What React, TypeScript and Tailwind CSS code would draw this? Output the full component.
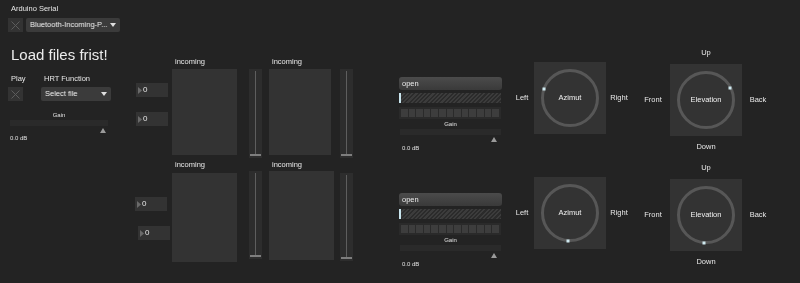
const XBox = () => (
  <div className="w-[15px] h-[14px] bg-[#333333] flex items-center justify-center">
    <svg width="9" height="9" viewBox="0 0 9 9">
      <path d="M0.5 0.5 L8.5 8.5 M8.5 0.5 L0.5 8.5" stroke="#5c5c5c" strokeWidth="1" />
    </svg>
  </div>
);

const Caret = () => (
  <svg width="6" height="4" viewBox="0 0 6 4">
    <polygon points="0,0 6,0 3,4" fill="#e0e0e0" />
  </svg>
);

const Dropdown = ({ label, w }: any) => (
  <div
    className={`h-[14px] ${w} rounded-[2px] bg-[#3b3b3b] flex items-center justify-between pl-[4px] pr-[4px] text-[7.5px] leading-[14px] text-[#e6e6e6]`}
  >
    <span>{label}</span>
    <Caret />
  </div>
);

const UpTriangle = () => (
  <svg width="6" height="5" viewBox="0 0 6 5">
    <polygon points="3,0 6,5 0,5" fill="#9a9a9a" />
  </svg>
);

const NumBox = ({ className }: any) => (
  <div className={`w-[32px] h-[14px] bg-[#333333] flex items-center gap-[1px] pl-[2px] ${className}`}>
    <svg width="4" height="7" viewBox="0 0 4 7">
      <polygon points="0,0 4,3.5 0,7" fill="#6a6a6a" />
    </svg>
    <span className="text-[8px] leading-[14px] text-[#e6e6e6]">0</span>
  </div>
);

const VSlider = ({ className }: any) => (
  <div className={`w-[13px] bg-[#2d2d2d] flex flex-col items-center pt-[2px] pb-[2px] ${className}`}>
    <div className="flex-1 w-[1px] bg-[#5e5e5e]" />
    <div className="w-[11px] h-[2px] bg-[#7e7e7e]" />
  </div>
);

const Incoming = ({ panel, gap }: any) => (
  <div className="flex flex-col">
    <div className="pl-[3px] h-[10px] text-[7.5px] leading-[10px] text-[#e6e6e6]">incoming</div>
    <div className={`${panel} ${gap} bg-[#333333]`} />
  </div>
);

const Player = ({ className }: any) => (
  <div className={`w-[103px] flex flex-col ${className}`}>
    <div className="h-[13px] rounded-[3px] bg-gradient-to-b from-[#4b4b4b] to-[#3a3a3a] pl-[3px] text-[7.5px] leading-[13px] text-[#ececec] grayscale">
      open
    </div>
    <div className="mt-[3px] h-[10px] w-[102px] flex bg-[repeating-linear-gradient(135deg,#3c3c3c_0px,#3c3c3c_1.5px,#2b2b2b_1.5px,#2b2b2b_3px)]">
      <div className="w-[2px] h-full bg-[#c9e5ee]" />
    </div>
    <div className="mt-[4px] h-[12px] w-[102px] bg-[#2a2a2a] flex gap-[1px] p-[2px]">
      {Array.from({ length: 13 }).map((_, i) => (
        <div key={i} className="flex-1 bg-[#3d3d3d]" />
      ))}
    </div>
    <div className="h-[10px] text-center text-[6px] leading-[10px] text-[#e0e0e0] grayscale">Gain</div>
    <div className="mx-[1px] h-[6px] bg-[#2a2a2a]" />
    <div className="mt-[2px] ml-[92px] h-[5px] flex">
      <UpTriangle />
    </div>
    <div className="mt-[1px] pl-[3px] h-[10px] text-[6px] leading-[10px] text-[#e0e0e0] grayscale">0.0 dB</div>
  </div>
);

const Dial = ({ label, dot }: any) => (
  <div className="relative w-[72px] h-[72px] bg-[#333333] flex items-center justify-center">
    <svg className="absolute inset-0" width="72" height="72" viewBox="0 0 72 72">
      <circle cx="36" cy="36" r="27.5" fill="none" stroke="#575757" strokeWidth="3" />
      <rect x={dot[0] - 1.5} y={dot[1] - 1.5} width="3" height="3" fill="#cfe9f0" />
    </svg>
    <span className="relative text-[7.5px] text-[#f0f0f0] grayscale">{label}</span>
  </div>
);

const Azimut = ({ dot, className }: any) => (
  <div className={`flex items-center text-[7.5px] text-[#e6e6e6] ${className}`}>
    <div className="w-[24px] text-center grayscale">Left</div>
    <Dial label="Azimut" dot={dot} />
    <div className="w-[26px] text-center grayscale">Right</div>
  </div>
);

const Elevation = ({ dot, className }: any) => (
  <div className={`flex flex-col text-[7.5px] text-[#e6e6e6] ${className}`}>
    <div className="ml-[34px] w-[72px] h-[10px] leading-[10px] text-center grayscale">Up</div>
    <div className="mt-[6px] flex items-center">
      <div className="w-[34px] text-center grayscale">Front</div>
      <Dial label="Elevation" dot={dot} />
      <div className="w-[32px] text-center grayscale">Back</div>
    </div>
    <div className="mt-[6px] ml-[34px] w-[72px] h-[10px] leading-[10px] text-center grayscale">Down</div>
  </div>
);

export default function App() {
  return (
    <div className="w-[800px] h-[283px] overflow-hidden bg-[#232323] flex items-start font-['Liberation_Sans',Arial,sans-serif] text-[#e6e6e6]">
      {/* left controls */}
      <div className="ml-[8px] w-[112px] flex flex-col grayscale">
        <div className="pt-[4px] pl-[3px] h-[14px] text-[7.5px] leading-[10px]">Arduino Serial</div>
        <div className="mt-[4px] flex gap-[3px]">
          <XBox />
          <Dropdown label="Bluetooth-Incoming-P..." w="w-[94px]" />
        </div>
        <div className="mt-[15px] pl-[3px] h-[16px] text-[15px] leading-[16px] text-[#ececec] whitespace-nowrap">
          Load files frist!
        </div>
        <div className="mt-[11px] flex h-[10px] text-[7.5px] leading-[10px]">
          <span className="pl-[3px] w-[36px]">Play</span>
          <span>HRT Function</span>
        </div>
        <div className="mt-[3px] flex">
          <XBox />
          <div className="ml-[18px]">
            <Dropdown label="Select file" w="w-[70px]" />
          </div>
        </div>
        <div className="mt-[10px] ml-[2px] w-[98px] h-[9px] text-center text-[6px] leading-[9px] text-[#e0e0e0]">Gain</div>
        <div className="ml-[2px] w-[98px] h-[6px] bg-[#2a2a2a]" />
        <div className="mt-[2px] ml-[92px] h-[5px] flex">
          <UpTriangle />
        </div>
        <div className="pl-[2px] h-[10px] text-[6px] leading-[10px] text-[#e0e0e0]">0.0 dB</div>
      </div>

      {/* number boxes */}
      <div className="ml-[15px] w-[34px] pt-[83px] flex flex-col grayscale">
        <NumBox className="ml-[1px]" />
        <NumBox className="ml-[1px] mt-[15px]" />
        <NumBox className="mt-[71px]" />
        <NumBox className="ml-[3px] mt-[15px]" />
      </div>

      {/* incoming displays */}
      <div className="ml-[3px] w-[181px] pt-[57px] flex flex-col grayscale">
        <div className="flex items-start">
          <Incoming panel="w-[65px] h-[86px]" gap="mt-[2px]" />
          <VSlider className="ml-[12px] mt-[12px] h-[89px]" />
          <div className="ml-[7px]">
            <Incoming panel="w-[62px] h-[86px]" gap="mt-[2px]" />
          </div>
          <VSlider className="ml-[9px] mt-[12px] h-[89px]" />
        </div>
        <div className="mt-[2px] flex items-start">
          <Incoming panel="w-[65px] h-[89px]" gap="mt-[3px]" />
          <VSlider className="ml-[12px] mt-[11px] h-[88px]" />
          <div className="ml-[7px]">
            <Incoming panel="w-[65px] h-[89px]" gap="mt-[1px]" />
          </div>
          <VSlider className="ml-[6px] mt-[13px] h-[88px]" />
        </div>
      </div>

      {/* players */}
      <div className="ml-[46px] pt-[77px] flex flex-col">
        <Player />
        <Player className="mt-[40px]" />
      </div>

      {/* azimut */}
      <div className="ml-[8px] pt-[62px] flex flex-col">
        <Azimut dot={[10, 27]} />
        <Azimut dot={[34, 64]} className="mt-[43px]" />
      </div>

      {/* elevation */}
      <div className="ml-[4px] pt-[48px] flex flex-col">
        <Elevation dot={[60, 24]} />
        <Elevation dot={[34, 64]} className="mt-[11px]" />
      </div>
    </div>
  );
}
